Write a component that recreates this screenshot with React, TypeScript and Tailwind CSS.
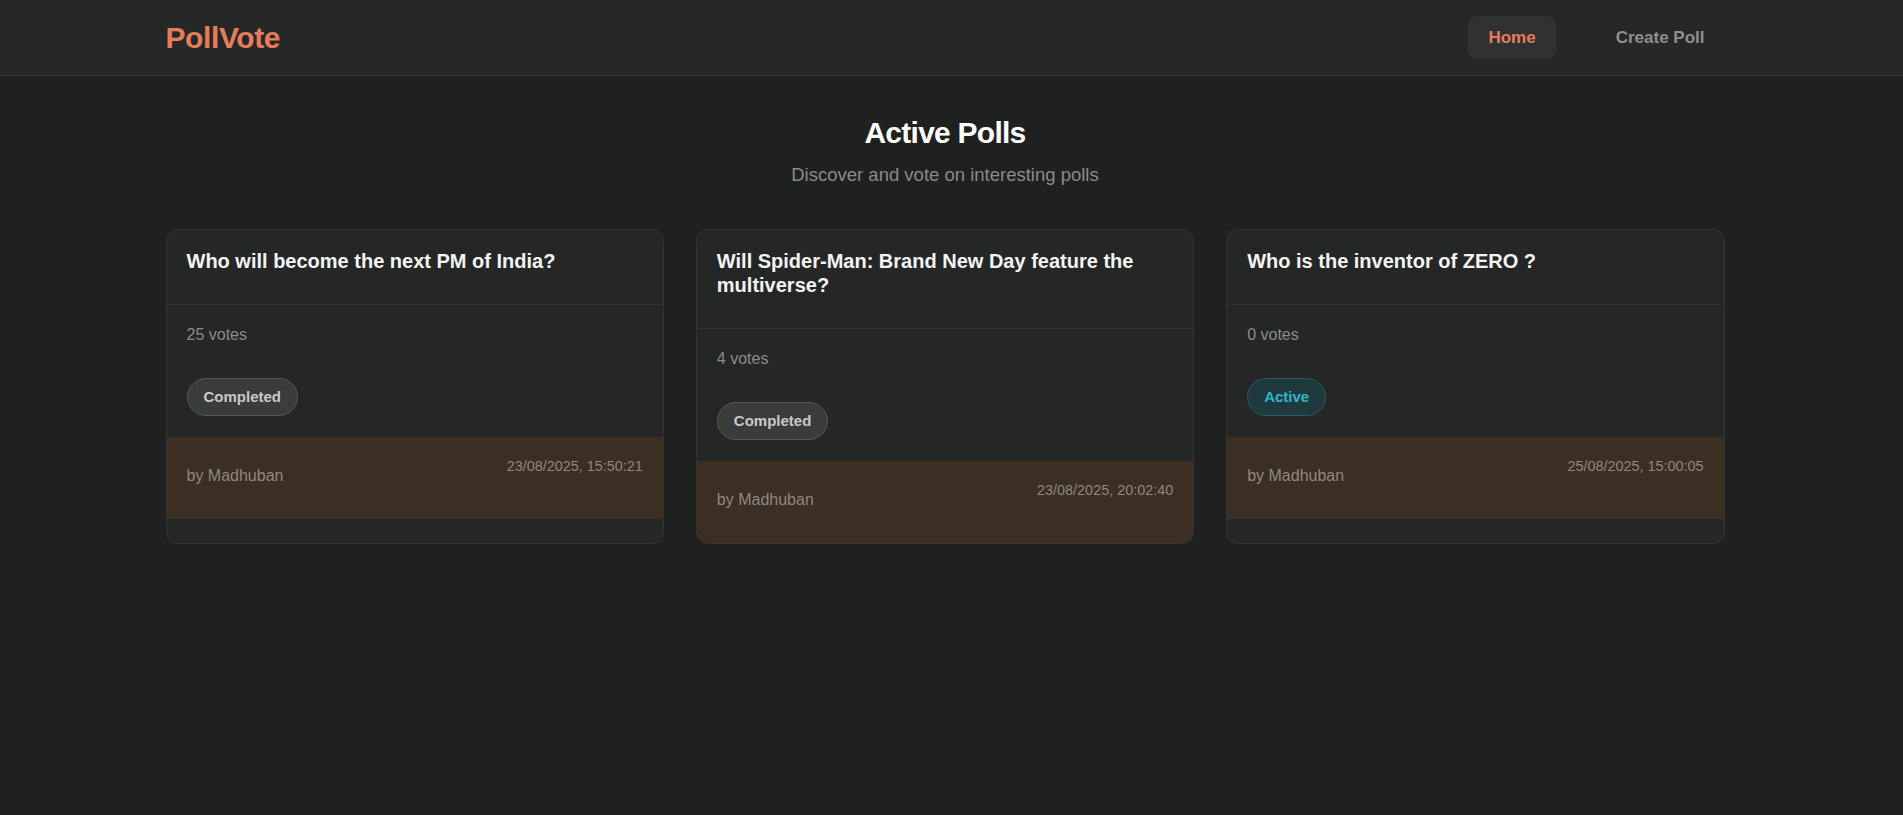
const polls = [
  {
    id: 1,
    question: 'Who will become the next PM of India?',
    votes: 25,
    status: 'completed',
    author: 'Madhuban',
    date: '23/08/2025, 15:50:21',
  },
  {
    id: 2,
    question: 'Will Spider-Man: Brand New Day feature the multiverse?',
    votes: 4,
    status: 'completed',
    author: 'Madhuban',
    date: '23/08/2025, 20:02:40',
  },
  {
    id: 3,
    question: 'Who is the inventor of ZERO ?',
    votes: 0,
    status: 'active',
    author: 'Madhuban',
    date: '25/08/2025, 15:00:05',
  },
];

type Poll = (typeof polls)[number];

function StatusBadge({ status }: { status: string }) {
  if (status === 'active') {
    return (
      <span className="inline-flex items-center h-[38px] px-4 rounded-full border border-[#2c5a61] bg-[#1f3a3f] text-[15px] font-bold text-[#2db6c9]">
        Active
      </span>
    );
  }
  return (
    <span className="inline-flex items-center h-[38px] px-4 rounded-full border border-[#575858] bg-[#3a3b3b] text-[15px] font-bold text-[#c9c9c9]">
      Completed
    </span>
  );
}

function PollCard({ poll }: { poll: Poll }) {
  return (
    <div className="flex flex-col rounded-xl border border-[#333535] bg-[#252626] overflow-hidden">
      {/* Question */}
      <div className="px-5 pt-[19px] pb-[31px] border-b border-[#313333]">
        <h3 className="text-[20px] leading-[24px] font-bold text-[#f4f4f4]">{poll.question}</h3>
      </div>

      {/* Votes + status */}
      <div className="px-5 pt-[18px] pb-[21px]">
        <p className="text-base leading-6 text-[#8c8c8c]">{poll.votes} votes</p>
        <div className="mt-[31px] flex">
          <StatusBadge status={poll.status} />
        </div>
      </div>

      {/* Footer */}
      <div className="h-[82px] px-5 flex justify-between items-start bg-[#3b2e23]">
        <span className="pt-[27px] text-base leading-6 text-[#8e8880]">by {poll.author}</span>
        <span className="pt-[19px] text-[14.4px] leading-5 text-[#8e8880]">{poll.date}</span>
      </div>
    </div>
  );
}

export default function App() {
  return (
    <div className="min-h-screen bg-[#1f2020] font-['Liberation_Sans',Arial,sans-serif]">
      <header className="bg-[#262727] border-b border-[#3a3b3b] pr-[13px]">
        <div className="w-[1559px] mx-auto h-[75px] flex items-center justify-between">
          <a href="#" className="text-3xl font-bold tracking-[-0.4px] text-[#e67c5c]">
            PollVote
          </a>
          <nav className="flex items-center gap-10">
            <button className="h-[43px] px-5 rounded-lg bg-[#303131] text-[17px] font-bold text-[#e67c5c]">
              Home
            </button>
            <button className="h-[43px] px-5 rounded-lg text-[17px] font-bold text-[#8f8f8f]">
              Create Poll
            </button>
          </nav>
        </div>
      </header>

      <main className="pr-[13px] pt-[39px]">
        <div className="w-[1559px] mx-auto">
          <div className="text-center">
            <h1 className="text-[30px] leading-9 font-bold tracking-tight text-white">Active Polls</h1>
            <p className="mt-[10px] text-[18.5px] leading-7 text-[#8a8a8a]">Discover and vote on interesting polls</p>
          </div>

          <div className="mt-[40px] grid grid-cols-3 gap-8">
            {polls.map((poll) => (
              <PollCard key={poll.id} poll={poll} />
            ))}
          </div>
        </div>
      </main>
    </div>
  );
}
